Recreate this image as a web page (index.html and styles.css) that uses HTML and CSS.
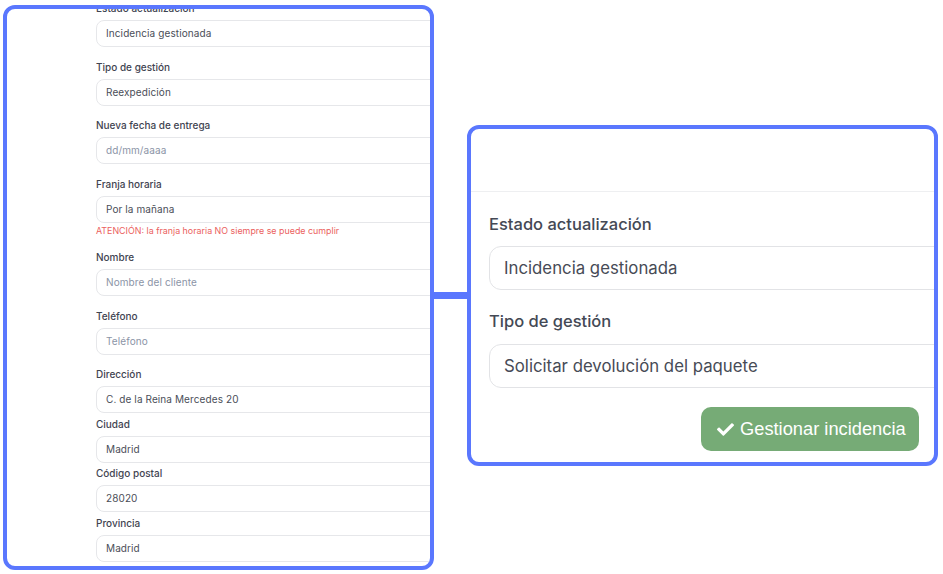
FILE: index.html
```html
<!DOCTYPE html>
<html lang="es">
<head>
<meta charset="utf-8">
<title>Gestionar incidencia</title>
<link rel="stylesheet" href="styles.css">
</head>
<body>
<div class="stage">
  <section class="panel panel-left">
    <div class="scroll">
      <div class="field">
        <label class="lbl">Estado actualización</label>
        <div class="inp">Incidencia gestionada</div>
      </div>
      <div class="field">
        <label class="lbl">Tipo de gestión</label>
        <div class="inp">Reexpedición</div>
      </div>
      <div class="field">
        <label class="lbl">Nueva fecha de entrega</label>
        <div class="inp ph">dd/mm/aaaa</div>
      </div>
      <div class="field">
        <label class="lbl">Franja horaria</label>
        <div class="inp">Por la mañana</div>
        <p class="warn">ATENCIÓN: la franja horaria NO siempre se puede cumplir</p>
      </div>
      <div class="field">
        <label class="lbl">Nombre</label>
        <div class="inp ph">Nombre del cliente</div>
      </div>
      <div class="field">
        <label class="lbl">Teléfono</label>
        <div class="inp ph">Teléfono</div>
      </div>
      <div class="field tight">
        <label class="lbl">Dirección</label>
        <div class="inp">C. de la Reina Mercedes 20</div>
      </div>
      <div class="field tight">
        <label class="lbl">Ciudad</label>
        <div class="inp">Madrid</div>
      </div>
      <div class="field tight">
        <label class="lbl">Código postal</label>
        <div class="inp">28020</div>
      </div>
      <div class="field tight">
        <label class="lbl">Provincia</label>
        <div class="inp">Madrid</div>
      </div>
    </div>
  </section>
  <div class="connector"></div>
  <section class="panel panel-right">
    <div class="head"></div>
    <div class="body">
      <label class="blbl">Estado actualización</label>
      <div class="binp">Incidencia gestionada</div>
      <label class="blbl second">Tipo de gestión</label>
      <div class="binp">Solicitar devolución del paquete</div>
      <div class="actions">
        <button class="btn">
          <svg class="chk" viewBox="0 0 512 512" aria-hidden="true"><path d="M173.898 439.404l-166.4-166.4c-9.997-9.997-9.997-26.206 0-36.204l36.203-36.204c9.997-9.998 26.207-9.998 36.204 0L192 312.69 432.095 72.596c9.997-9.997 26.207-9.997 36.204 0l36.203 36.204c9.997 9.997 9.997 26.206 0 36.204l-294.4 294.401c-9.998 9.997-26.207 9.997-36.204-.001z"/></svg>
          Gestionar incidencia
        </button>
      </div>
    </div>
  </section>
</div>
</body>
</html>
```
FILE: styles.css
```css
* { box-sizing: border-box; }
html, body { margin: 0; padding: 0; background: #ffffff; }
body {
  width: 943px;
  height: 574px;
  overflow: hidden;
  font-family: Inter, "Noto Sans", "Liberation Sans", sans-serif;
  color: #454a57;
}
.stage {
  display: flex;
  align-items: flex-start;
  padding: 5px 0 0 3px;
}
.panel {
  background: #fff;
  border: 4px solid #5a77fe;
  border-radius: 12px;
  overflow: hidden;
  flex: none;
}
.panel-left {
  width: 431px;
  height: 565px;
}
.scroll {
  margin-top: -8px;
  padding-left: 89px;
}
.field { margin-bottom: 12.5px; }
.field.tight { margin-bottom: 3.7px; }
.lbl {
  display: block;
  font-size: 10px;
  line-height: 14px;
  font-weight: 500;
  color: #3f4451;
  margin-bottom: 5px;
}
.inp {
  width: 420px;
  height: 27px;
  border: 1px solid #e6e7ea;
  border-radius: 8px;
  padding: 0 9px;
  font-size: 10px;
  line-height: 25px;
  color: #4a4e58;
  letter-spacing: 0.1px;
}
.inp.ph { color: #8b94a6; }
.warn {
  margin: 0 0 2px;
  padding-top: 1px;
  font-size: 8.9px;
  line-height: 14px;
  color: #eb5f60;
}
.connector {
  flex: none;
  width: 33px;
  height: 7px;
  margin-top: 287px;
  background: #5a77fe;
}
.panel-right {
  width: 471px;
  height: 341px;
  margin-top: 120px;
}
.head {
  height: 63px;
  border-bottom: 1px solid #eeeff1;
}
.body {
  padding: 21px 0 0 18px;
}
.blbl {
  display: block;
  font-size: 16.5px;
  line-height: 22px;
  font-weight: 500;
  color: #444955;
  margin-bottom: 11px;
}
.blbl.second { margin-top: 20px; margin-bottom: 12px; }
.binp {
  width: 470px;
  height: 44px;
  border: 1px solid #e2e3e6;
  border-radius: 12px;
  padding: 0 14px;
  font-size: 16.8px;
  line-height: 42px;
  color: #474b56;
}
.actions {
  display: flex;
  justify-content: flex-end;
  padding-right: 15px;
  margin-top: 19px;
}
.btn {
  display: flex;
  align-items: center;
  gap: 6px;
  height: 44px;
  width: 218px;
  padding: 0 0 0 16px;
  border: none;
  border-radius: 10px;
  background: #76ab76;
  color: #ffffff;
  font-family: "Liberation Sans", Arial, sans-serif;
  font-size: 18.3px;
}
.chk { width: 17px; height: 17px; fill: #ffffff; }
```
